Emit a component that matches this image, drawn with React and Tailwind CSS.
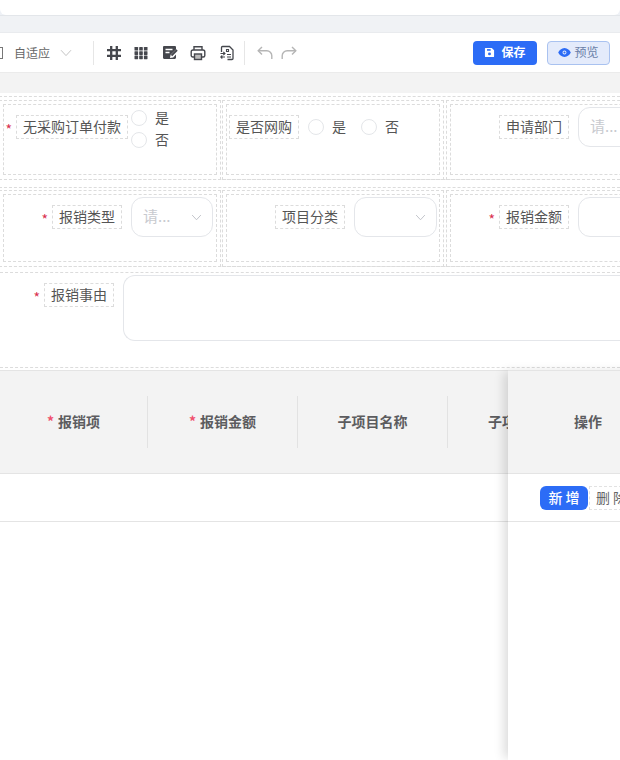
import React from "react";

function Chevron({ className = "" }) {
  return (
    <svg viewBox="0 0 12 8" className={className} fill="none" stroke="currentColor" strokeWidth="1">
      <path d="M1 1.2 L6 6.6 L11 1.2" />
    </svg>
  );
}

function Radio({ label, className = "" }) {
  return (
    <div className={`flex items-center h-4 ${className}`}>
      <span className="w-4 h-4 rounded-full border border-[#e4e6e9] bg-white shrink-0" />
      <span className="ml-[8px] w-[14px] pb-[2px] text-[14px] leading-4 text-[#555]">{label}</span>
    </div>
  );
}

function Label({ text, required, className = "" }) {
  return (
    <div className={`flex items-center shrink-0 justify-end ${className}`}>
      {required && <span className="text-[#d9304f] text-[14px] leading-none mr-[4px] mt-[3px]">*</span>}
      <span className="border border-dashed border-[#dcdcdc] h-6 px-[6px] leading-[20px] text-[14px] text-[#555] whitespace-nowrap">
        {text}
      </span>
    </div>
  );
}

function Select({ placeholder, width = "w-[82px]", chevron = true }) {
  return (
    <div className={`${width} h-10 shrink-0 border border-[#e4e6ea] rounded-xl bg-white flex items-center justify-between pl-[11px] pr-[10px]`}>
      <span className="text-[15px] pb-[2px] text-[#c8cacf]">{placeholder}</span>
      {chevron && <Chevron className="w-[11px] h-[7px] text-[#b9bcc2]" />}
    </div>
  );
}

function Col({ width, outerH, innerH, pad, children, className = "" }) {
  return (
    <div className={`${width} ${outerH} shrink-0 border border-dashed border-[#dcdcdc] p-[3px] ${className}`}>
      <div className={`${innerH} ${pad} border border-dashed border-[#dcdcdc] flex items-start`}>{children}</div>
    </div>
  );
}

function Field({ label, required, labelW = "w-[118px]", select }) {
  return (
    <div className="flex items-start">
      <div className={`${labelW} pt-[8px]`}>
        <Label required={required} text={label} className="w-full" />
      </div>
      <div className="ml-[9px]">{select}</div>
    </div>
  );
}

function Th({ children, required, width, divider = true }) {
  return (
    <div className={`${width} shrink-0 h-[52px] pb-[2px] flex items-center justify-center text-[14px] font-bold text-[#5c5c5f] ${divider ? "border-r border-[#e2e2e2]" : ""}`}>
      {required && <span className="text-[#f0506e] mr-[4px]">*</span>}
      {children}
    </div>
  );
}

export default function App() {
  return (
    <div
      className="relative w-[620px] h-[760px] overflow-hidden bg-white flex flex-col"
      style={{ fontFamily: '"Noto Sans CJK SC", "Noto Sans", sans-serif' }}
    >
      {/* top strip */}
      <div className="bg-[#eef1f6] shrink-0">
        <div className="h-[15px] bg-white rounded-b-[6px]" />
      </div>
      <div className="h-[18px] bg-[#f0f2f5] border-t border-[#e3e6ea] border-b border-b-[#e9ebee] shrink-0" />

      {/* toolbar */}
      <div className="h-[40px] shrink-0 bg-white border-b border-[#ebebeb] flex items-center text-[#45474d]">
        <div className="w-[3px] h-3 border-y border-r border-[#777] shrink-0" />
        <span className="ml-[11px] text-[12px] text-[#666] leading-none">自适应</span>
        <Chevron className="ml-[10px] w-[12px] h-[8px] text-[#c4c4c4]" />
        <div className="ml-[21px] w-px h-[24px] bg-[#e6e6e6]" />
        {/* hash */}
        <svg viewBox="0 0 16 16" className="ml-[12px] w-4 h-4" fill="none" stroke="currentColor" strokeWidth="2.3">
          <path d="M5.2 1v14M10.8 1v14M1 5.2h14M1 10.8h14" />
        </svg>
        {/* columns */}
        <svg viewBox="0 0 14 14" className="ml-[12px] w-[14px] h-[14px]" fill="currentColor">
          <rect x="0.5" y="1" width="3.6" height="3.6" rx="0.4" />
          <rect x="5.2" y="1" width="3.6" height="3.6" rx="0.4" />
          <rect x="9.9" y="1" width="3.6" height="3.6" rx="0.4" />
          <rect x="0.5" y="5.3" width="3.6" height="3.6" rx="0.4" />
          <rect x="5.2" y="5.3" width="3.6" height="3.6" rx="0.4" />
          <rect x="9.9" y="5.3" width="3.6" height="3.6" rx="0.4" />
          <rect x="0.5" y="9.6" width="3.6" height="3.6" rx="0.4" />
          <rect x="5.2" y="9.6" width="3.6" height="3.6" rx="0.4" />
          <rect x="9.9" y="9.6" width="3.6" height="3.6" rx="0.4" />
        </svg>
        {/* note-edit */}
        <svg viewBox="0 0 16 16" className="ml-[14px] w-[16px] h-[16px]">
          <path d="M1 2.2C1 1.5 1.5 1 2.2 1h10.6c.7 0 1.2.5 1.2 1.2v2.2L8.6 9.8 8 13l3.2-.6 2.8-2.8v3.2c0 .7-.5 1.2-1.2 1.2H2.2C1.5 14 1 13.500 1 12.800z" fill="currentColor" />
          <path d="M3.5 4.500h7M3.500 7.500h4" stroke="#fff" strokeWidth="1.300" />
          <path d="M9.500 10.500l5.500-5.500" stroke="currentColor" strokeWidth="2" />
        </svg>
        {/* printer */}
        <svg viewBox="0 0 16 16" className="ml-[12px] w-[16px] h-[16px]" fill="none" stroke="currentColor" strokeWidth="1.400">
          <path d="M4 5V1.700h8V5" />
          <path d="M4 12H2.700A1.500 1.500 0 0 1 1.200 10.500V6.800A1.800 1.800 0 0 1 3 5h10a1.800 1.800 0 0 1 1.800 1.800v3.700a1.500 1.500 0 0 1-1.500 1.500H12" />
          <rect x="4.500" y="9" width="7" height="5.500" fill="#bbb" />
        </svg>
        {/* file swap */}
        <svg viewBox="0 0 16 16" className="ml-[13px] w-[16px] h-[16px]" fill="none" stroke="currentColor" strokeWidth="1.300">
          <path d="M5 1.500h5.500L14 5v8.500a1 1 0 0 1-1 1H8.500" />
          <path d="M2.500 7V2.500a1 1 0 0 1 1-1H5" />
          <path d="M7.500 4.500h2v2h-2z" strokeWidth="1.100" />
          <path d="M8 9.500h4M8 12h4" strokeWidth="1.200" />
          <path d="M1.500 8.500h4.500M4.300 6.800 6 8.500 4.300 10.200M6 12H1.800M3.300 10.500 1.800 12l1.500 1.500" strokeWidth="1.100" />
        </svg>
        <div className="ml-[9px] w-px h-[24px] bg-[#e6e6e6]" />
        {/* undo */}
        <svg viewBox="0 0 16 16" className="ml-[12px] w-[16px] h-[16px] text-[#b5b5b5]" fill="none" stroke="currentColor" strokeWidth="1.400">
          <path d="M5 2 1.200 5.800 5 9.600" />
          <path d="M1.500 5.800h8.300a5 5 0 0 1 5 5v3.200" />
        </svg>
        {/* redo */}
        <svg viewBox="0 0 16 16" className="ml-[8px] w-[16px] h-[16px] text-[#b5b5b5]" fill="none" stroke="currentColor" strokeWidth="1.400">
          <path d="M11 2l3.800 3.800L11 9.600" />
          <path d="M14.500 5.800H6.200a5 5 0 0 0-5 5v3.200" />
        </svg>
        <div className="flex-1" />
        <button className="w-[64px] h-6 rounded-[4px] bg-[#2c6cf6] text-white text-[12px] font-bold flex items-center justify-center gap-[6px]">
          <svg viewBox="0 0 12 12" className="w-[11px] h-[11px]" fill="currentColor">
            <path d="M1.500 1h7L11 3.500v6.500A1 1 0 0 1 10 11H2A1 1 0 0 1 1 10V1.500A.5.500 0 0 1 1.500 1z" />
            <rect x="3.300" y="2.300" width="4" height="1.800" fill="#2c6cf6" />
            <circle cx="6" cy="7.500" r="1.600" fill="#2c6cf6" />
          </svg>
          <span className="pb-[2px]">保存</span>
        </button>
        <button className="ml-[10px] mr-[10px] w-[63px] h-6 rounded-[4px] bg-[#e4ebfb] border border-[#a9c2f0] text-[#6a7fa8] text-[12px] flex items-center justify-center gap-[3px]">
          <svg viewBox="0 0 14 10" className="w-[13px] h-[9px]" fill="#2c6cf6">
            <path fillRule="evenodd" d="M7 0c3.300 0 5.800 2.500 7 5-1.200 2.500-3.700 5-7 5S1.200 7.500 0 5c1.200-2.500 3.700-5 7-5zm0 2.800A2.200 2.200 0 1 0 7 7.200 2.200 2.200 0 0 0 7 2.800z" />
            <circle cx="7" cy="5" r="1.200" />
          </svg>
          <span className="pb-[2px]">预览</span>
        </button>
      </div>

      <div className="h-[20px] bg-[#f3f3f3] shrink-0" />

      {/* form */}
      <div className="pt-[3px] bg-white">
        <div className="h-[84px] border-y border-dashed border-[#dcdcdc] pt-[3px] flex -ml-[1px]">
          <Col width="w-[222px]" outerH="h-[80px]" innerH="h-[71px]" pad="pt-[10px]">
            <Label required text="无采购订单付款" className="w-[124px]" />
            <div className="ml-[3px] -mt-[5px] flex flex-col gap-[6px]">
              <Radio label="是" />
              <Radio label="否" />
            </div>
          </Col>
          <Col width="w-[222px]" outerH="h-[80px]" innerH="h-[71px]" pad="pt-[10px]" className="ml-[1px]">
            <div className="pl-[2px] flex items-center h-6">
              <Label text="是否网购" />
              <Radio label="是" className="ml-[9px]" />
              <Radio label="否" className="ml-[15px]" />
            </div>
          </Col>
          <Col width="w-[300px]" outerH="h-[80px]" innerH="h-[71px]" pad="pt-[2px]" className="ml-[2px]">
            <Field label="申请部门" select={<Select placeholder="请..." chevron={false} />} />
          </Col>
        </div>

        <div className="mt-[7px] h-[80px] border-y border-dashed border-[#dcdcdc] pt-[2px] flex -ml-[1px]">
          <Col width="w-[222px]" outerH="h-[77px]" innerH="h-[68px]" pad="pt-[2px]">
            <Field required label="报销类型" select={<Select placeholder="请..." />} />
          </Col>
          <Col width="w-[222px]" outerH="h-[77px]" innerH="h-[68px]" pad="pt-[2px]" className="ml-[1px]">
            <Field label="项目分类" select={<Select placeholder="" width="w-[83px]" />} />
          </Col>
          <Col width="w-[300px]" outerH="h-[77px]" innerH="h-[68px]" pad="pt-[2px]" className="ml-[2px]">
            <Field required label="报销金额" select={<Select placeholder="" chevron={false} />} />
          </Col>
        </div>

        <div className="mt-[5px] h-[96px] border-y border-dashed border-[#dcdcdc] flex items-start">
          <div className="w-[114px] pt-[10px]"><Label required text="报销事由" className="w-full" /></div>
          <div className="ml-[9px] mt-[2px] flex-1 h-[66px] border border-r-0 border-[#e4e6ea] rounded-l-xl bg-white" />
        </div>
      </div>

      {/* table */}
      <div className="mt-[2px] h-[104px] shrink-0 bg-[#f3f3f3] border-y border-[#e4e4e4] flex items-center overflow-hidden">
        <Th required width="w-[148px]">报销项</Th>
        <Th required width="w-[150px]">报销金额</Th>
        <Th width="w-[150px]">子项目名称</Th>
        <Th width="w-[150px]" divider={false}>子项目编码</Th>
      </div>
      <div className="h-[48px] shrink-0 border-b border-[#e4e4e4]" />

      {/* fixed column */}
      <div className="absolute left-[508px] top-[370px] bottom-0 w-[140px] bg-white shadow-[-6px_0_10px_-2px_rgba(0,0,0,0.14)]">
        <div className="h-[104px] pb-[2px] bg-[#f3f3f3] border-y border-[#e4e4e4] flex items-center pl-[66px] text-[14px] font-bold text-[#5c5c5f]">
          操作
        </div>
        <div className="h-[48px] border-b border-[#e4e4e4] flex items-center pl-[32px]">
          <span className="w-[48px] h-6 rounded-[6px] bg-[#2c6cf6] text-white text-[14px] font-medium flex items-center justify-center tracking-[3px] pl-[3px] shrink-0">新增</span>
          <span className="ml-[1px] h-6 w-[48px] border border-dashed border-[#e2e2e2] text-[14px] text-[#666] flex items-center tracking-[3px] pl-[6px] whitespace-nowrap shrink-0">删除</span>
        </div>
      </div>
    </div>
  );
}
